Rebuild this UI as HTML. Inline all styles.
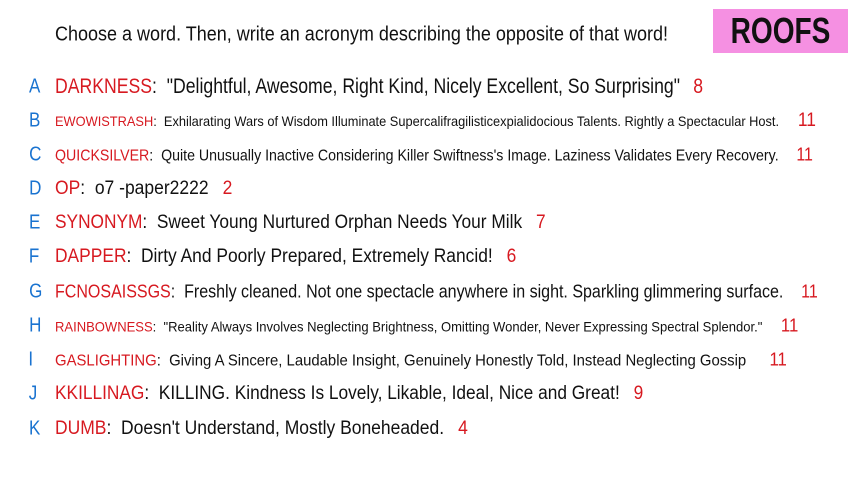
<!DOCTYPE html>
<html><head><style>
body{margin:0;width:853px;height:480px;background:#fff;position:relative;overflow:hidden;font-family:"Liberation Sans",sans-serif;color:#111}
.l{position:absolute;white-space:nowrap;transform-origin:0 50%}
.k{position:absolute;left:28px;color:#1a73d0;font-size:20px;transform:translateY(-50%) scaleX(0.85)}
.r{color:#d71920}
.n{color:#d71920;margin-left:10px}
#box{position:absolute;left:713px;top:9px;width:135px;height:44px;background:#f590e2}
#box span{display:block;font-size:36px;font-weight:bold;text-align:center;line-height:44px;transform:scaleX(0.78)}
</style></head><body>
<div class="l" style="left:55px;top:35px;font-size:20px;transform:translateY(-50%) scaleX(0.90)">Choose a word. Then, write an acronym describing the opposite of that word!</div>
<div id="box"><span>ROOFS</span></div>
<div class="k" style="top:87px">A</div><div class="l" style="left:55px;top:87px;font-size:21px;transform:translateY(-50%) scaleX(0.84)"><span class="r">DARKNESS</span>:&nbsp; "Delightful, Awesome, Right Kind, Nicely Excellent, So Surprising"<span class="n">&nbsp;8</span></div>
<div class="k" style="top:121px">B</div><div class="l" style="left:55px;top:121px;font-size:14px;transform:translateY(-50%) scaleX(0.915)"><span class="r">EWOWISTRASH</span>:&nbsp; Exhilarating Wars of Wisdom Illuminate Supercalifragilisticexpialidocious Talents. Rightly a Spectacular Host.<span class="n" style="font-size:19px">&nbsp;&nbsp;11</span></div>
<div class="k" style="top:155px">C</div><div class="l" style="left:55px;top:155px;font-size:16px;transform:translateY(-50%) scaleX(0.886)"><span class="r">QUICKSILVER</span>:&nbsp; Quite Unusually Inactive Considering Killer Swiftness's Image. Laziness Validates Every Recovery.<span class="n" style="font-size:18px">&nbsp;&nbsp;11</span></div>
<div class="k" style="top:189px">D</div><div class="l" style="left:55px;top:189px;font-size:19px;transform:translateY(-50%) scaleX(0.92)"><span class="r">OP</span>:&nbsp; o7 -paper2222<span class="n">&nbsp;2</span></div>
<div class="k" style="top:223px">E</div><div class="l" style="left:55px;top:223px;font-size:19px;transform:translateY(-50%) scaleX(0.91)"><span class="r">SYNONYM</span>:&nbsp; Sweet Young Nurtured Orphan Needs Your Milk<span class="n">&nbsp;7</span></div>
<div class="k" style="top:257px">F</div><div class="l" style="left:55px;top:257px;font-size:19px;transform:translateY(-50%) scaleX(0.915)"><span class="r">DAPPER</span>:&nbsp; Dirty And Poorly Prepared, Extremely Rancid!<span class="n">&nbsp;6</span></div>
<div class="k" style="top:292px">G</div><div class="l" style="left:55px;top:292px;font-size:18px;transform:translateY(-50%) scaleX(0.89)"><span class="r">FCNOSAISSGS</span>:&nbsp; Freshly cleaned. Not one spectacle anywhere in sight. Sparkling glimmering surface.<span class="n">&nbsp;&nbsp;11</span></div>
<div class="k" style="top:326px">H</div><div class="l" style="left:55px;top:326px;font-size:14px;transform:translateY(-50%) scaleX(0.93)"><span class="r">RAINBOWNESS</span>:&nbsp; "Reality Always Involves Neglecting Brightness, Omitting Wonder, Never Expressing Spectral Splendor."<span class="n" style="font-size:18px">&nbsp;&nbsp;11</span></div>
<div class="k" style="top:360px">I</div><div class="l" style="left:55px;top:360px;font-size:16px;transform:translateY(-50%) scaleX(0.93)"><span class="r">GASLIGHTING</span>:&nbsp; Giving A Sincere, Laudable Insight, Genuinely Honestly Told, Instead Neglecting Gossip<span class="n" style="font-size:18px">&nbsp;&nbsp;&nbsp;11</span></div>
<div class="k" style="top:394px">J</div><div class="l" style="left:55px;top:394px;font-size:19px;transform:translateY(-50%) scaleX(0.91)"><span class="r">KKILLINAG</span>:&nbsp; KILLING. Kindness Is Lovely, Likable, Ideal, Nice and Great!<span class="n">&nbsp;9</span></div>
<div class="k" style="top:429px">K</div><div class="l" style="left:55px;top:429px;font-size:19px;transform:translateY(-50%) scaleX(0.92)"><span class="r">DUMB</span>:&nbsp; Doesn't Understand, Mostly Boneheaded.<span class="n">&nbsp;4</span></div>
</body></html>
